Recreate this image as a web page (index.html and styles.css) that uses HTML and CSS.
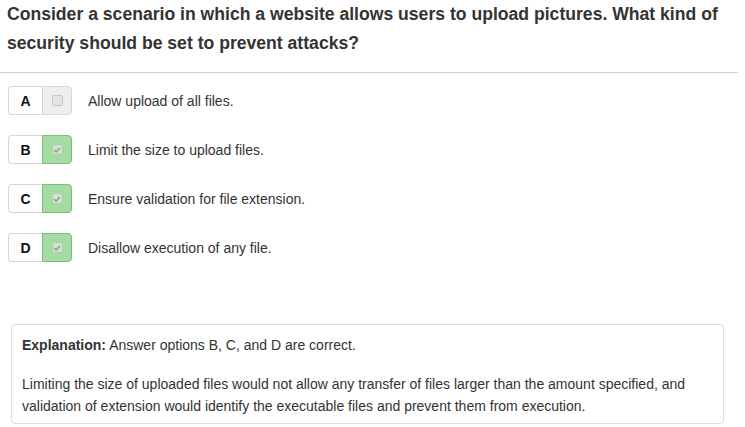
FILE: index.html
```html
<!DOCTYPE html>
<html>
<head>
<meta charset="utf-8">
<link rel="stylesheet" href="styles.css">
</head>
<body>
<div class="page">
  <h1 class="question">Consider a scenario in which a website allows users to upload pictures. What kind of security should be set to prevent attacks?</h1>
  <div class="rule"></div>
  <div class="options">
    <div class="option">
      <div class="badge"><span class="letter">A</span><span class="check"><span class="box"></span></span></div>
      <span class="label">Allow upload of all files.</span>
    </div>
    <div class="option">
      <div class="badge on"><span class="letter">B</span><span class="check"><span class="box"><svg viewBox="0 0 10 10" width="8" height="8"><path d="M1.5 5.2 L4 7.6 L8.6 2.4" fill="none" stroke="#8e9b8e" stroke-width="1.8"/></svg></span></span></div>
      <span class="label">Limit the size to upload files.</span>
    </div>
    <div class="option">
      <div class="badge on"><span class="letter">C</span><span class="check"><span class="box"><svg viewBox="0 0 10 10" width="8" height="8"><path d="M1.5 5.2 L4 7.6 L8.6 2.4" fill="none" stroke="#8e9b8e" stroke-width="1.8"/></svg></span></span></div>
      <span class="label">Ensure validation for file extension.</span>
    </div>
    <div class="option">
      <div class="badge on"><span class="letter">D</span><span class="check"><span class="box"><svg viewBox="0 0 10 10" width="8" height="8"><path d="M1.5 5.2 L4 7.6 L8.6 2.4" fill="none" stroke="#8e9b8e" stroke-width="1.8"/></svg></span></span></div>
      <span class="label">Disallow execution of any file.</span>
    </div>
  </div>
  <div class="explanation">
    <p><b>Explanation:</b> Answer options B, C, and D are correct.</p>
    <p>Limiting the size of uploaded files would not allow any transfer of files larger than the amount specified, and validation of extension would identify the executable files and prevent them from execution.</p>
  </div>
</div>
</body>
</html>
```
FILE: styles.css
```css
html, body {
  margin: 0;
  padding: 0;
  background: #fff;
}
body {
  font-family: "Liberation Sans", Arial, sans-serif;
  color: #333;
}
.page {
  width: 745px;
}
.question {
  margin: 0;
  padding: 0 10px 0 7px;
  font-size: 17.6px;
  line-height: 29px;
  font-weight: bold;
  color: #333;
}
.rule {
  margin: 14px 7px 0 0;
  height: 1px;
  background: #d0d0d0;
}
.options {
  display: flex;
  flex-direction: column;
  gap: 20px;
  padding: 13px 0 0 8px;
}
.option {
  display: flex;
  align-items: center;
  height: 29px;
}
.badge {
  display: flex;
  height: 29px;
}
.letter {
  width: 33px;
  box-sizing: content-box;
  display: flex;
  align-items: center;
  justify-content: center;
  font-size: 14px;
  font-weight: bold;
  color: #111;
  background: #fff;
  border: 1px solid #d6d6d6;
  border-right: none;
  border-radius: 4px 0 0 4px;
}
.check {
  width: 28px;
  display: flex;
  align-items: center;
  justify-content: center;
  background: #eeeeee;
  border: 1px solid #d6d6d6;
  border-radius: 0 4px 4px 0;
}
.box {
  width: 11px;
  height: 11px;
  box-sizing: border-box;
  border: 1px solid #c6c6c6;
  border-radius: 2px;
  background: #e4e4e4;
  display: flex;
  align-items: center;
  justify-content: center;
}
.badge.on .check {
  background: #a6dba4;
  border-color: #78c177;
}
.badge.on .box {
  background: #cde6cb;
  border-color: #acd0aa;
}
.label {
  margin-left: 16px;
  font-size: 14px;
  color: #333;
}
.explanation {
  margin: 62px 21px 0 11px;
  border: 1px solid #dcdcdc;
  border-radius: 4px;
  padding: 9px 10px 6px 10px;
  font-size: 14px;
  line-height: 22px;
  color: #333;
}
.explanation p {
  margin: 0;
}
.explanation p + p {
  margin-top: 17px;
}
.explanation b {
  color: #333;
}
```
